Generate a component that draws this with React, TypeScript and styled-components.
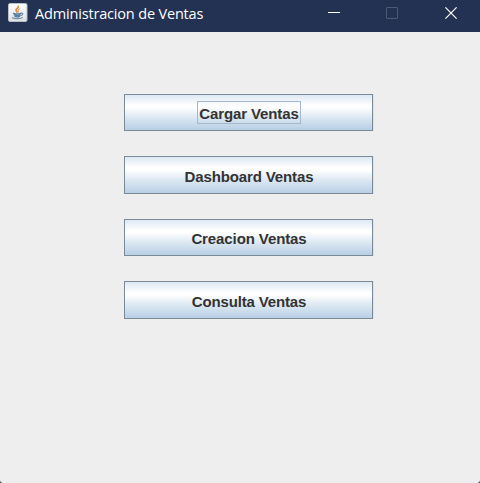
import React from 'react';
import styled, { createGlobalStyle } from 'styled-components';

const GlobalStyle = createGlobalStyle`
  html, body { margin: 0; padding: 0; background: #233253; }
  *, *::before, *::after { box-sizing: border-box; }
`;

const Window = styled.div`
  display: flex;
  flex-direction: column;
  width: 480px;
  height: 483px;
  overflow: hidden;
  border-radius: 0 0 3px 3px;
  background: #eeeeee;
`;

const TitleBar = styled.header`
  display: flex;
  flex: none;
  height: 32px;
  padding-left: 8px;
  background: #233253;
  color: #ffffff;
`;

const AppIcon = styled.svg`
  flex: none;
  width: 20px;
  height: 20px;
  margin-top: 3px;
`;

const Title = styled.h1`
  flex: 1;
  margin: 0 0 0 7px;
  font: 400 14.5px/27px "Open Sans", "Noto Sans", sans-serif;
  letter-spacing: -0.17px;
  white-space: nowrap;
`;

const Controls = styled.div`
  display: flex;
`;

const Control = styled.button`
  display: flex;
  justify-content: center;
  width: 58px;
  height: 32px;
  padding: 7px 0 0;
  border: 0;
  background: transparent;
  color: #ffffff;

  &:disabled { color: #4d5a77; }

  &:last-child {
    width: 59px;
    padding-left: 1px;
  }
`;

const Glyph = styled.svg`
  width: 12px;
  height: 12px;
  fill: none;
  stroke: currentColor;
`;

const Content = styled.main`
  display: flex;
  flex: 1;
  flex-direction: column;
  gap: 25px;
  padding: 62px 0 0 124px;
`;

const MetalButton = styled.button<{ $height: number }>`
  display: flex;
  align-items: flex-start;
  justify-content: center;
  width: 249px;
  height: ${(p) => p.$height}px;
  padding: 6px 0 0 1px;
  border: 1px solid #7a8a99;
  border-radius: 0;
  box-shadow: 1px 0 0 #dae2ea;
  background: linear-gradient(#dde8f3 0%, #ffffff 30%, #ffffff 36%, #dce8f2 64%, #b8cfe5 100%);
  color: #333333;
  font: 700 15px/17px "Liberation Sans", Arial, sans-serif;
  white-space: nowrap;
`;

const Label = styled.span<{ $focused: boolean; $spacing: number; $drop: number }>`
  height: 23px;
  margin-top: ${(p) => p.$drop}px;
  padding: 3px 1px 0;
  border: 1px solid ${(p) => (p.$focused ? '#a3b8cc' : 'transparent')};
  letter-spacing: ${(p) => p.$spacing}px;
`;

const actions = [
  { label: 'Cargar Ventas', height: 37, spacing: -0.12, drop: 0 },
  { label: 'Dashboard Ventas', height: 38, spacing: -0.13, drop: 1 },
  { label: 'Creacion Ventas', height: 37, spacing: -0.1, drop: 0 },
  { label: 'Consulta Ventas', height: 38, spacing: -0.15, drop: 1 },
];

function JavaIcon() {
  return (
    <AppIcon viewBox="0 0 20 20" aria-hidden="true">
      <defs>
        <linearGradient id="tile" x1="0" y1="0" x2="0" y2="1">
          <stop offset="0" stopColor="#ffffff" />
          <stop offset="1" stopColor="#dde1e4" />
        </linearGradient>
      </defs>
      <rect x="0.5" y="0.5" width="18.5" height="18" rx="1.5" fill="url(#tile)" stroke="#b8c0c8" />
      <g fill="none" strokeLinecap="round">
        <path d="M10.2 3.3c1.2 1.7-3 2.5-2.2 4.2.3.8.9 1 1 1.6" stroke="#e9853a" strokeWidth="1.6" />
        <path d="M11.6 5.8c-1.8.9-2 1.5-1.3 2.3.3.5.1.8-.2 1.1" stroke="#e99a5c" strokeWidth="1.1" />
        <path d="M5.4 10.3c1.8.6 5.6.6 7.4 0M6.2 11.9c1.8.6 4.6.6 6 0M7 13.4c1.4.5 3.3.5 4.4 0" stroke="#51799b" strokeWidth="1.3" />
        <path d="M13 10.1c2.6-.5 2.2 1.9-.3 2.6" stroke="#6687a2" strokeWidth="1.1" />
        <path d="M4.4 14.7c1.8 1.3 8.7 1.1 10-.1" stroke="#6d90ab" strokeWidth="1.1" />
      </g>
    </AppIcon>
  );
}

export default function App() {
  return (
    <>
      <GlobalStyle />
      <Window>
        <TitleBar>
          <JavaIcon />
          <Title>Administracion de Ventas</Title>
          <Controls>
            <Control aria-label="Minimizar">
              <Glyph viewBox="0 0 12 12"><path d="M0 5.5h12" /></Glyph>
            </Control>
            <Control aria-label="Maximizar" disabled>
              <Glyph viewBox="0 0 12 12"><rect x="0.5" y="0.5" width="11" height="11" rx="0.5" /></Glyph>
            </Control>
            <Control aria-label="Cerrar">
              <Glyph viewBox="0 0 12 12"><path d="M0.4 0.4 11.6 11.6M11.6 0.4 0.4 11.6" strokeWidth="1.2" /></Glyph>
            </Control>
          </Controls>
        </TitleBar>
        <Content>
          {actions.map((a, i) => (
            <MetalButton key={a.label} $height={a.height}>
              <Label $focused={i === 0} $spacing={a.spacing} $drop={a.drop}>{a.label}</Label>
            </MetalButton>
          ))}
        </Content>
      </Window>
    </>
  );
}
